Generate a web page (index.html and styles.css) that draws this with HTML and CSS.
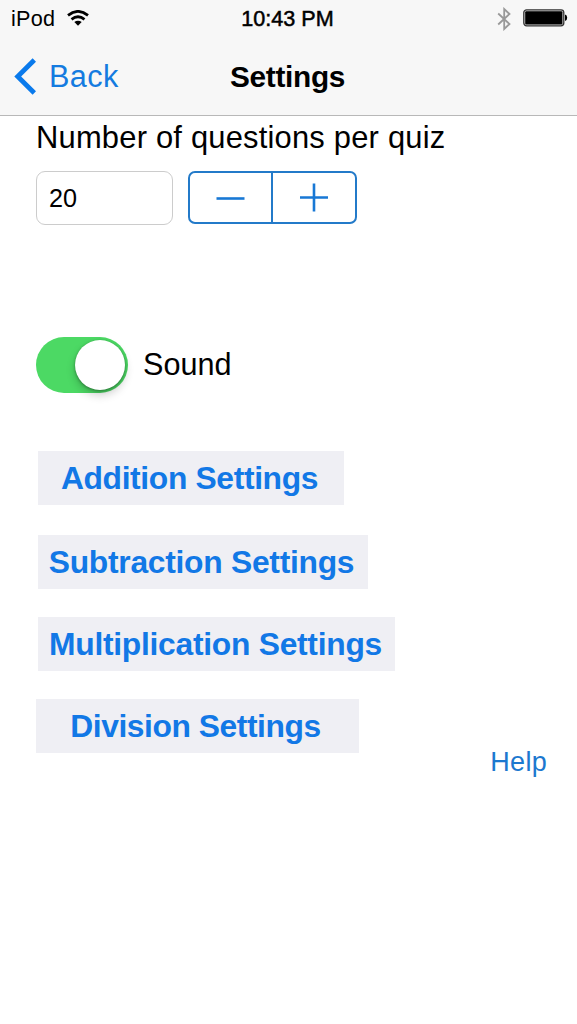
FILE: index.html
```html
<!DOCTYPE html>
<html lang="en">
<head>
<meta charset="utf-8">
<title>Settings</title>
<link rel="stylesheet" href="styles.css">
</head>
<body>
<header class="top">
  <div class="status">
    <div class="status-left">
      <span class="carrier">iPod</span>
      <svg class="wifi" width="22" height="17" viewBox="0 0 22 17">
        <g fill="none" stroke="#000" stroke-width="2.7">
          <path d="M1 5.4 Q11 -2.7 21 5.4"/>
          <path d="M4.5 9.4 Q11 4.1 17.5 9.4"/>
        </g>
        <path d="M7.3 12 Q11 9.3 14.7 12 L11 15.8Z"/>
      </svg>
    </div>
    <span class="time">10:43 PM</span>
    <div class="status-right">
      <svg class="bluetooth" width="15" height="24" viewBox="0 0 15 24">
        <path d="M1.2 6.5 L12.5 17 L7.2 22 V2 L12.5 7 L1.2 17.5" fill="none" stroke="#999" stroke-width="1.8"/>
      </svg>
      <svg class="battery" width="46" height="18" viewBox="0 0 46 18">
        <rect x=".8" y=".8" width="40" height="16" rx="2.8" fill="#ddd" stroke="#333" stroke-width="1.3"/>
        <rect x="2.2" y="2.2" width="37.2" height="13.2" rx="1"/>
        <path d="M42 5.5 Q44.2 6 44.2 8.8 Q44.2 11.6 42 12.1Z"/>
      </svg>
    </div>
  </div>
  <nav class="nav">
    <a class="back">
      <svg width="22" height="37" viewBox="0 0 22 37"><path d="M20.3 2 L3.7 18.5 L20.3 35" fill="none" stroke="#0a7aec" stroke-width="4.8"/></svg>
      <span>Back</span>
    </a>
    <h1 class="title">Settings</h1>
  </nav>
</header>
<main class="content">
  <label class="question-label">Number of questions per quiz</label>
  <div class="quantity">
    <div class="field">20</div>
    <div class="stepper">
      <button class="step"><svg width="30" height="30" viewBox="0 0 30 30"><path d="M.5 15.5H28.5"/></svg></button>
      <button class="step"><svg width="30" height="30" viewBox="0 0 30 30"><path d="M1 14.5H29M15 .5V28.5"/></svg></button>
    </div>
  </div>
  <div class="sound">
    <div class="toggle"><div class="knob"></div></div>
    <span class="sound-label">Sound</span>
  </div>
  <div class="links">
    <button class="link addition">Addition Settings</button>
    <button class="link subtraction">Subtraction Settings</button>
    <button class="link multiplication">Multiplication Settings</button>
    <button class="link division">Division Settings</button>
  </div>
  <a class="help">Help</a>
</main>
</body>
</html>
```

FILE: styles.css
```css
* { box-sizing: border-box; }
body {
  margin: 0;
  height: 1024px;
  overflow: hidden;
  background: #fff;
  color: #000;
  font-family: "Liberation Sans", Arial, sans-serif;
  white-space: nowrap;
}
svg { display: block; flex: none; }
button { border: 0; margin: 0; padding: 0; font-family: inherit; }
.top {
  height: 116px;
  background: #f7f7f7;
  border-bottom: 1px solid #b8b8b8;
}
.status {
  display: grid;
  grid-template-columns: 1fr auto 1fr;
  height: 37px;
  line-height: 37px;
  font-size: 21.6px;
}
.status-left { display: flex; padding-left: 11px; }
.carrier { width: 56px; letter-spacing: .3px; }
.wifi { margin-top: 10px; }
.time { -webkit-text-stroke: .5px #000; padding-right: 2px; }
.status-right { display: flex; justify-content: flex-end; padding-right: 8px; }
.bluetooth { margin: 7px 11px 0 0; }
.battery { margin-top: 9px; }
.nav {
  display: grid;
  grid-template-columns: 1fr auto 1fr;
  height: 78px;
  line-height: 79px;
  font-size: 30.6px;
}
.back { display: flex; padding-left: 14px; gap: 13px; color: #147be0; letter-spacing: .4px; }
.back svg { margin-top: 21px; }
.title {
  margin: 0;
  padding-right: 2px;
  font-size: 29.8px;
  font-weight: 700;
  letter-spacing: -.3px;
}
.content { display: flex; flex-direction: column; padding-left: 36px; }
.question-label { height: 44px; line-height: 43px; font-size: 30.9px; letter-spacing: .21px; }
.quantity { display: flex; gap: 15px; margin-top: 11px; height: 54px; }
.field {
  width: 137px;
  height: 54px;
  padding-left: 12px;
  border: 1px solid #ccc;
  border-radius: 9px;
  font-size: 25.2px;
  line-height: 52px;
}
.stepper {
  display: flex;
  width: 169px;
  height: 53px;
  border: 2px solid #237ac9;
  border-radius: 7px;
}
.step {
  display: flex;
  flex: 0 0 81px;
  align-items: center;
  justify-content: center;
  background: none;
}
.step + .step { flex: 1; border-left: 2px solid #237ac9; }
.step path { fill: none; stroke: #1878d5; stroke-width: 2.6; }
.sound { display: flex; gap: 15px; margin-top: 112px; height: 56px; }
.toggle {
  display: flex;
  justify-content: flex-end;
  width: 92px;
  height: 56px;
  padding: 3px;
  border-radius: 28px;
  background: #4cd964;
}
.knob {
  width: 50px;
  height: 50px;
  border-radius: 50%;
  background: #fff;
  box-shadow: 0 5px 10px rgba(0, 0, 0, .2), 0 1px 3px rgba(0, 0, 0, .35);
}
.sound-label { font-size: 30.6px; line-height: 55px; }
.links { display: flex; flex-direction: column; align-items: flex-start; margin-top: 58px; }
.link {
  height: 54px;
  margin-left: 2px;
  background: #efeff4;
  color: #1278e6;
  font-size: 31.8px;
  font-weight: 700;
  letter-spacing: -.27px;
  line-height: 54px;
}
.addition { width: 306px; padding-right: 3px; letter-spacing: -.35px; }
.subtraction { width: 330px; margin-top: 30px; padding-right: 3px; }
.multiplication { width: 357px; margin-top: 28px; padding-right: 2px; }
.division { width: 323px; margin: 28px 0 0; padding-right: 4px; letter-spacing: -.45px; }
.help {
  align-self: flex-end;
  height: 30px;
  margin: -6px 30px 0 0;
  color: #1c78cf;
  font-size: 27px;
  letter-spacing: .3px;
  line-height: 30px;
}
```
